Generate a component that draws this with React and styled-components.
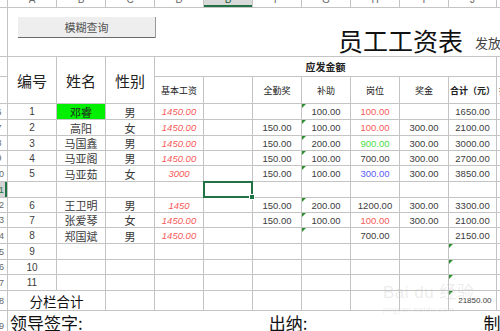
import React from 'react'
import styled, { createGlobalStyle, css } from 'styled-components'

const GlobalStyle = createGlobalStyle`
  html, body {
    margin: 0;
    padding: 0;
    background: #ffffff;
    overflow: hidden;
  }
  body {
    font-family: "Liberation Sans", "Noto Sans CJK SC", sans-serif;
    color: #333;
  }
`

const LINE = '#c4c4c4'
const GREEN = '#217346'
const RED = '#f65a5a'

const textColors = {
  red: RED,
  green: '#4cdc4c',
  blue: '#5c5cf6',
}

const Viewport = styled.div`
  width: 500px;
  height: 331px;
  overflow: hidden;
  position: relative;
`

const Sheet = styled.div`
  display: grid;
  width: 560px;
  grid-template-columns: 7px repeat(9, 48px) 47px 62px;
  grid-template-rows: 7px 48px 19px 26px 15px 15px 14px 14px 15px 15px 14px 14px 15px 15px 14px 15px 19px 30px;
  gap: 1px;
  background: ${LINE};
`

const ColHead = styled.div`
  background: ${p => (p.$active ? '#d9d9d9' : '#ffffff')};
  color: ${p => (p.$active ? '#1e5c38' : '#666')};
  font-size: 10px;
  line-height: 12px;
  text-align: center;
  overflow: hidden;
  position: relative;
  ${p => p.$active && css`
    box-shadow: inset 0 -2px 0 ${GREEN};
  `}
  span {
    display: block;
    margin-top: -6px;
  }
`

const RowHead = styled.div`
  background: ${p => (p.$active ? '#d4d4d4' : '#ffffff')};
  color: ${p => (p.$active ? GREEN : '#666')};
  font-size: 9px;
  overflow: hidden;
  display: flex;
  align-items: center;
  ${p => p.$active && css`
    box-shadow: inset -2px 0 0 ${GREEN};
  `}
  span {
    flex: none;
    width: 16px;
    margin-left: -9px;
    text-align: center;
  }
`

const TopCell = styled.div`
  grid-column: span 11;
  background: #fff;
  display: flex;
  align-items: flex-start;
  white-space: nowrap;
  overflow: hidden;
`

const SearchButton = styled.div`
  flex: none;
  margin: 9px 0 0 10px;
  width: 137px;
  height: 20px;
  background: #eeeeee;
  border-bottom: 1px solid #6a6a6a;
  box-shadow: 1px 0 0 #9a9a9a;
  display: flex;
  align-items: center;
  justify-content: center;
  font-family: "Noto Sans CJK SC", sans-serif;
  font-size: 11px;
  color: #555;
`

const Title = styled.div`
  flex: none;
  margin: 14px 0 0 183px;
  font-family: "Noto Sans CJK SC", sans-serif;
  font-size: 25px;
  line-height: 36px;
  color: #111;
`

const SubTitle = styled.div`
  flex: none;
  margin: 25px 0 0 12px;
  font-family: "Noto Sans CJK SC", sans-serif;
  font-size: 13px;
  line-height: 20px;
  color: #444;
`

const Cell = styled.div`
  position: relative;
  background: ${p => p.$bg || '#ffffff'};
  color: ${p => (p.$color ? textColors[p.$color] : '#3c3c3c')};
  font-size: ${p => p.$size || 9.5}px;
  font-style: ${p => (p.$italic ? 'italic' : 'normal')};
  font-weight: ${p => (p.$bold ? 700 : 400)};
  display: flex;
  align-items: center;
  justify-content: ${p => p.$justify || 'center'};
  white-space: nowrap;
  overflow: visible;
  ${p => p.$cols && css`grid-column: span ${p.$cols};`}
  ${p => p.$rows && css`grid-row: span ${p.$rows};`}
  ${p => p.$flag && css`
    &::before {
      content: '';
      position: absolute;
      top: 0;
      left: 0;
      border-top: 4px solid #2f8f2f;
      border-right: 4px solid transparent;
    }
  `}
  ${p => p.$selected && css`
    &::after {
      content: '';
      position: absolute;
      inset: -1px;
      border: 2px solid ${GREEN};
      z-index: 2;
    }
    i {
      position: absolute;
      right: -3px;
      bottom: -3px;
      width: 4px;
      height: 4px;
      background: ${GREEN};
      border: 1px solid #fff;
      z-index: 3;
    }
  `}
`

const HeadText = styled.span`
  font-family: "Noto Sans CJK SC", sans-serif;
  font-size: ${p => p.$size || 9}px;
  color: #222;
  font-weight: ${p => (p.$bold ? 700 : 400)};
`

const CnText = styled.span`
  font-family: "Noto Sans CJK SC", sans-serif;
  font-size: ${p => p.$size || 11}px;
  color: ${p => p.$color || '#3a3a3a'};
`

const FooterCell = styled.div`
  grid-column: span 11;
  background: #fff;
  display: flex;
  align-items: flex-start;
  white-space: nowrap;
  overflow: hidden;
  font-family: "Noto Sans CJK SC", sans-serif;
  font-size: 17px;
  line-height: 22px;
  color: #111;
`

const Sign = styled.span`
  flex: none;
  margin-left: ${p => p.$left}px;
  margin-top: 1px;
`

const Watermark = styled.div`
  position: absolute;
  left: 383px;
  top: 284px;
  color: rgba(190, 190, 190, 0.28);
  font-family: "Liberation Sans", "Noto Sans CJK SC", sans-serif;
  pointer-events: none;
  line-height: 1;
  b {
    font-size: 17px;
    font-weight: 400;
    letter-spacing: 0.5px;
  }
  small {
    display: block;
    font-size: 8px;
    margin-top: 5px;
    letter-spacing: 0.4px;
  }
`

const columns = ['A', 'B', 'C', 'D', 'B', 'F', 'G', 'H', 'I', 'J', 'K']

const rows = [
  { label: 6, no: 1, name: '邓睿', sex: '男', base: '1450.00', full: '', sub: '100.00', post: '100.00', postColor: 'red', bonus: '', total: '1650.00', hl: true },
  { label: 7, no: 2, name: '高阳', sex: '女', base: '1450.00', full: '150.00', sub: '100.00', post: '100.00', postColor: 'red', bonus: '300.00', total: '2100.00' },
  { label: 8, no: 3, name: '马国鑫', sex: '男', base: '1450.00', full: '150.00', sub: '200.00', post: '900.00', postColor: 'green', bonus: '300.00', total: '3000.00' },
  { label: 9, no: 4, name: '马亚阁', sex: '男', base: '1450.00', full: '150.00', sub: '100.00', post: '700.00', bonus: '300.00', total: '2700.00' },
  { label: 10, no: 5, name: '马亚茹', sex: '女', base: '3000', full: '150.00', sub: '100.00', post: '300.00', postColor: 'blue', bonus: '300.00', total: '3850.00' },
  { label: 11, blank: true },
  { label: 12, no: 6, name: '王卫明', sex: '男', base: '1450', full: '150.00', sub: '200.00', post: '1200.00', bonus: '300.00', total: '3300.00' },
  { label: 13, no: 7, name: '张爱琴', sex: '女', base: '1450.00', full: '150.00', sub: '100.00', post: '100.00', postColor: 'red', bonus: '300.00', total: '2100.00' },
  { label: 14, no: 8, name: '郑国斌', sex: '男', base: '1450.00', full: '', sub: '', post: '700.00', bonus: '', total: '2150.00' },
  { label: 15, no: 9, empty: true },
  { label: 16, no: 10, empty: true },
  { label: 17, no: 11, empty: true },
]

function DataRow({ row }) {
  if (row.blank) {
    return (
      <>
        <RowHead $active><span>{row.label}</span></RowHead>
        <Cell />
        <Cell />
        <Cell />
        <Cell />
        <Cell $selected><i /></Cell>
        <Cell />
        <Cell />
        <Cell />
        <Cell />
        <Cell />
        <Cell />
      </>
    )
  }
  const filled = !row.empty
  return (
    <>
      <RowHead><span>{row.label}</span></RowHead>
      <Cell $size={10}>{row.no}</Cell>
      <Cell $bg={row.hl ? '#00f000' : undefined}>
        {filled && <CnText $color={row.hl ? '#222' : undefined}>{row.name}</CnText>}
      </Cell>
      <Cell>{filled && <CnText>{row.sex}</CnText>}</Cell>
      <Cell $color="red" $italic>{filled && row.base}</Cell>
      <Cell />
      <Cell>{filled && row.full}</Cell>
      <Cell $flag={filled}>{filled && row.sub}</Cell>
      <Cell $color={row.postColor}>{filled && row.post}</Cell>
      <Cell>{filled && row.bonus}</Cell>
      <Cell $flag={row.empty}>{filled && row.total}</Cell>
      <Cell />
    </>
  )
}

export default function App() {
  return (
    <Viewport>
      <GlobalStyle />
      <Sheet>
        <ColHead />
        {columns.map((c, i) => (
          <ColHead key={i} $active={i === 4}><span>{c}</span></ColHead>
        ))}

        <RowHead />
        <TopCell>
          <SearchButton>模糊查询</SearchButton>
          <Title>员工工资表</Title>
          <SubTitle>发放日期：</SubTitle>
        </TopCell>

        <RowHead />
        <Cell $rows={2}><HeadText $size={15}>编号</HeadText></Cell>
        <Cell $rows={2}><HeadText $size={15}>姓名</HeadText></Cell>
        <Cell $rows={2}><HeadText $size={15}>性别</HeadText></Cell>
        <Cell $cols={7}><HeadText $size={10} $bold>应发金额</HeadText></Cell>
        <Cell />

        <RowHead />
        <Cell><HeadText>基本工资</HeadText></Cell>
        <Cell />
        <Cell><HeadText>全勤奖</HeadText></Cell>
        <Cell><HeadText>补助</HeadText></Cell>
        <Cell><HeadText>岗位</HeadText></Cell>
        <Cell><HeadText>奖金</HeadText></Cell>
        <Cell><HeadText $bold>合计（元）</HeadText></Cell>
        <Cell $justify="flex-start"><HeadText>&nbsp;扣款</HeadText></Cell>

        {rows.map(r => <DataRow key={r.label} row={r} />)}

        <RowHead><span>18</span></RowHead>
        <Cell $cols={2}><CnText $size={13.5} $color="#111">分栏合计</CnText></Cell>
        <Cell />
        <Cell />
        <Cell />
        <Cell />
        <Cell />
        <Cell />
        <Cell />
        <Cell $flag $size={8} $justify="flex-end">21850.00&nbsp;&nbsp;</Cell>
        <Cell />

        <RowHead><span>19</span></RowHead>
        <FooterCell>
          <Sign $left={2}>领导签字:</Sign>
          <Sign $left={186}>出纳:</Sign>
          <Sign $left={176}>制表:</Sign>
        </FooterCell>
      </Sheet>
      <Watermark>
        <b>Bai du 经验</b>
        <small>jingyan.baidu.com</small>
      </Watermark>
    </Viewport>
  )
}
